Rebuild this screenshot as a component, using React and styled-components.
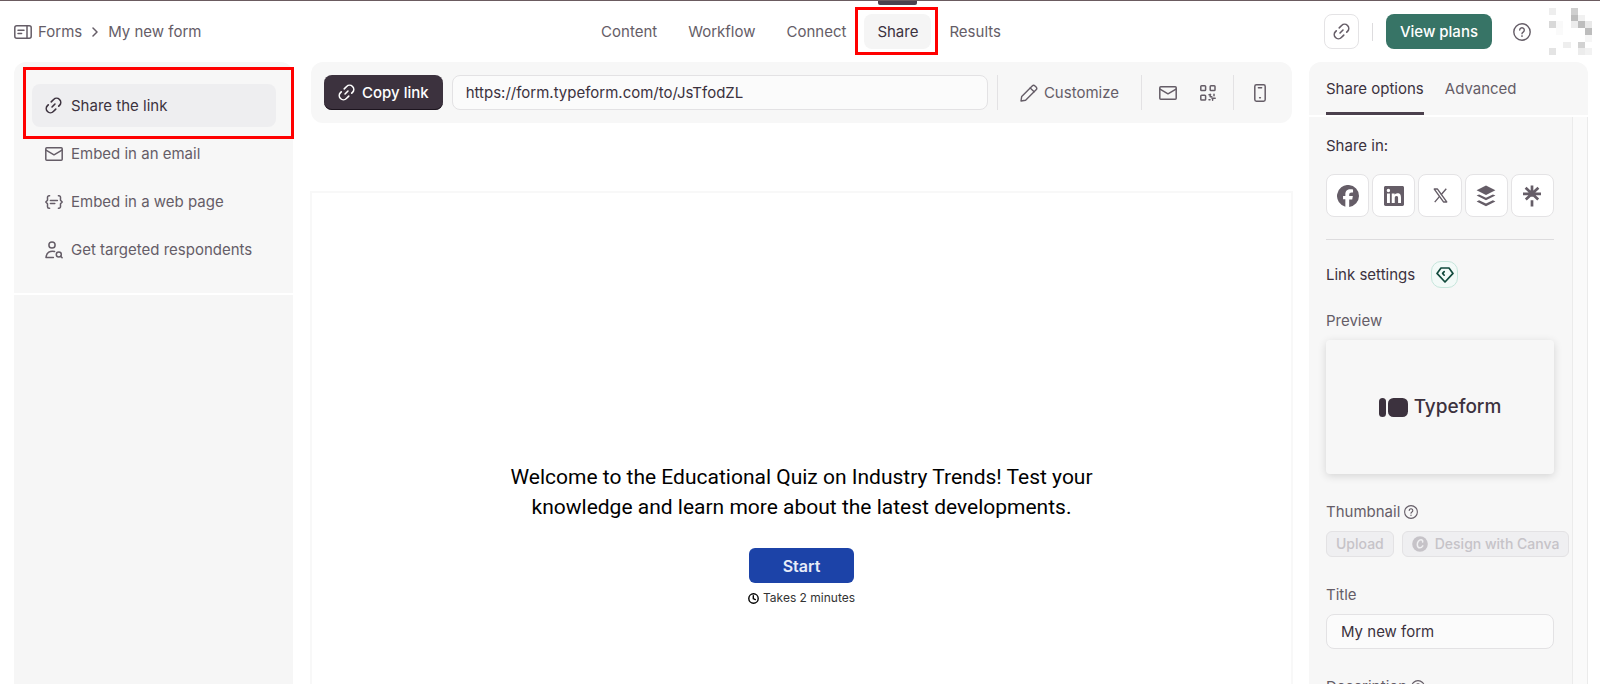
import React, { useState } from "react";
import styled, { createGlobalStyle } from "styled-components";

const LinkIcon = ({ size = 17 }) => (
  <Svg width={size} height={size} viewBox="3 3 18 18" strokeWidth="1.7">
    <g transform="rotate(-45 12 12)">
      <path d="M11 16.4H7.4a4.4 4.4 0 0 1 0-8.8h1.2" />
      <path d="M13 7.6h3.6a4.4 4.4 0 0 1 0 8.8h-1.2" />
      <path d="M9.8 12h4.4" />
    </g>
  </Svg>
);

const FormsIcon = () => (
  <Svg width="18" height="14" viewBox="0 0 18 14">
    <rect x="0.8" y="0.8" width="16.4" height="12.4" rx="2" />
    <path d="M13 1v12M4 5.2h6M4 8.6h3.6" />
  </Svg>
);

const MailIcon = () => (
  <Svg width="18" height="14" viewBox="0 0 18 14">
    <rect x="0.8" y="0.8" width="16.4" height="12.4" rx="1" />
    <path d="M1 3.2l8 4.6 8-4.6" />
  </Svg>
);

const BracesIcon = () => (
  <Svg width="18" height="14" viewBox="0 0 18 14">
    <path d="M4.6 0.8H4A1.5 1.5 0 0 0 2.5 2.3v2.9L0.8 7l1.7 1.8v2.9A1.5 1.5 0 0 0 4 13.2h.6" />
    <path d="M13.4 0.8h.6a1.5 1.5 0 0 1 1.5 1.5v2.9L17.2 7l-1.7 1.8v2.9a1.5 1.5 0 0 1-1.5 1.5h-.6" />
    <path d="M5.4 5.4h7M5.4 8.6h4.4" />
  </Svg>
);

const PersonIcon = () => (
  <Svg width="18" height="18" viewBox="0 0 18 18">
    <circle cx="7" cy="4" r="3.1" />
    <path d="M9.6 10.4C5 9.4 1.6 11.6 1 16.4h7.4" />
    <circle cx="13.8" cy="13.4" r="2.5" />
    <path d="M15.7 15.2l1.4 1.5" />
  </Svg>
);

const PencilIcon = () => (
  <Svg width="18" height="18" viewBox="0 0 18 18" strokeWidth="1.4">
    <path d="M1 17l.7-4.6L12.2 1.9a2 2 0 0 1 2.8 0l1.1 1.1a2 2 0 0 1 0 2.8L5.6 16.3z" />
    <path d="M10.2 3.9l3.9 3.9" />
  </Svg>
);

const QrIcon = () => (
  <Svg width="16" height="16" viewBox="0 0 16 16">
    <rect x="0.8" y="0.8" width="4.8" height="4.8" rx="0.8" />
    <rect x="10.2" y="0.8" width="4.8" height="4.8" rx="0.8" />
    <rect x="0.8" y="10.2" width="4.8" height="4.8" rx="0.8" />
    <path d="M9 9.8h1.6M10.2 9.2v2.6h1.6M14 9.2v1.6M9 14.8h1M12 13.2h3.2M12.6 13.2v2" />
  </Svg>
);

const PhoneIcon = () => (
  <Svg width="12" height="18" viewBox="0 0 12 18">
    <rect x="0.8" y="0.8" width="10.4" height="16.4" rx="1.6" />
    <path d="M4.4 3.8h3.2M5.6 13.8h.8" />
  </Svg>
);

const HelpIcon = ({ size }) => (
  <Svg width={size} height={size} viewBox="0 0 18 18" strokeWidth="1.4">
    <circle cx="9" cy="9" r="8.2" />
    <path d="M6.7 7.1a2.3 2.3 0 1 1 3.5 2c-.8.5-1.2.8-1.2 1.6M9 12.8v.6" />
  </Svg>
);

const GemIcon = () => (
  <Svg width="18" height="16" viewBox="0 0 18 16" strokeWidth="1.7">
    <path d="M5 1h8l4 5.4L9 15 1 6.4z" />
    <path d="M8.2 4.6L6.6 6.4l1.6 1.8" />
  </Svg>
);

const ClockIcon = () => (
  <Svg width="11" height="11" viewBox="0 0 11 11" strokeWidth="1.4">
    <circle cx="5.5" cy="5.5" r="4.7" />
    <path d="M5.3 2.8v2.9l2 .9" />
  </Svg>
);

const FacebookIcon = () => (
  <Svg width="22" height="22" viewBox="0 0 24 24" $solid>
    <path d="M24 12A12 12 0 1 0 9.1 23.6v-8H6.6V12h2.5v-1.6c0-4 1.9-5.9 5.8-5.9.8 0 2 .1 2.6.3v3.3h-1.4c-2 0-2.8.8-2.8 2.8V12h4l-.7 3.7h-3.3v8.2A12 12 0 0 0 24 12z" />
  </Svg>
);

const LinkedinIcon = () => (
  <Svg width="20" height="20" viewBox="0 0 24 24" $solid>
    <path d="M22.2 0H1.8C.8 0 0 .8 0 1.7v20.6c0 .9.8 1.7 1.8 1.7h20.4c1 0 1.8-.8 1.8-1.7V1.7c0-.9-.8-1.7-1.8-1.7zM7.1 20.5H3.6V9h3.5zM5.3 7.4a2 2 0 1 1 0-4.1 2 2 0 0 1 0 4.1zm15.1 13.1h-3.5v-5.6c0-1.3 0-3-1.9-3s-2.1 1.4-2.1 2.9v5.7H9.3V9h3.4v1.6c.5-.9 1.6-1.9 3.4-1.9 3.6 0 4.3 2.4 4.3 5.5z" />
  </Svg>
);

const XIcon = () => (
  <Svg width="15" height="15" viewBox="-1 -1 26 26" strokeWidth="2.4" strokeLinecap="butt">
    <path d="M1.2 0.8h5.6L22.8 23.2h-5.6z" />
    <path d="M22 0.4l-9 10.2M10.4 13.6L2 23.4" />
  </Svg>
);

const BufferIcon = () => (
  <Svg width="20" height="22" viewBox="0 0 20 22" $solid>
    <path d="M10 0.6l9.4 4.7L10 10 .6 5.3z" />
    <path d="M.6 10.6l2.5-1.2L10 12.8l6.9-3.4 2.5 1.2L10 15.3z" />
    <path d="M.6 16.4l2.5-1.2 6.9 3.4 6.9-3.4 2.5 1.2L10 21.2z" />
  </Svg>
);

const LinktreeIcon = () => (
  <Svg width="18" height="22" viewBox="0 0 18 22" strokeWidth="2.7" strokeLinecap="butt">
    <path d="M9 0.4v11.4M9 15.2v6.4M0 8.8h18M2.6 2.8l12.6 11.6M15.4 2.8L2.8 14.4" />
  </Svg>
);

const CanvaIcon = () => (
  <Svg width="16" height="16" viewBox="0 0 16 16" strokeWidth="1.5">
    <circle cx="8" cy="8" r="7.8" fill="currentColor" stroke="none" />
    <path
      d="M10.6 6.1c.4-1.2-.3-2.3-1.6-2.3-2 0-3.7 2.3-3.7 4.6 0 2 1 3.4 2.6 3.4 1.3 0 2.2-.8 2.9-1.9"
      stroke="#efeff1"
    />
  </Svg>
);

const LogoMark = () => (
  <Svg width="29" height="19" viewBox="0 0 29 19" $solid>
    <rect width="7" height="19" rx="3.5" />
    <rect x="9" width="20" height="19" rx="5.5" />
  </Svg>
);

const avatarCells = [
  [0, 0, "#eeeeee"], [3, 0, "#cfcfcf"],
  [3, 1, "#bdbdbd"], [4, 1, "#f1f1f1"],
  [0, 2, "#d8d8d8"], [1, 2, "#f9f9f9"], [3, 2, "#ececec"], [4, 2, "#bdbdbd"], [5, 2, "#e9e9e9"],
  [1, 3, "#fafafa"], [5, 3, "#bdbdbd"],
  [5, 4, "#f6f6f6"],
  [2, 5, "#eeeeee"], [4, 5, "#d2d2d2"],
  [0, 6, "#e4e4e4"], [4, 6, "#ececec"], [5, 6, "#f2f2f2"],
];

const Avatar = () => (
  <svg width="43" height="47" viewBox="0 0 6 7" preserveAspectRatio="none" shapeRendering="crispEdges">
    {avatarCells.map(([x, y, fill]) => (
      <rect key={`${x}-${y}`} x={x} y={y} width="1" height="1" fill={fill} />
    ))}
  </svg>
);

const navItems = ["Content", "Workflow", "Connect", "Share", "Results"];

const menuItems = [
  { label: "Share the link", icon: <LinkIcon /> },
  { label: "Embed in an email", icon: <MailIcon /> },
  { label: "Embed in a web page", icon: <BracesIcon /> },
  { label: "Get targeted respondents", icon: <PersonIcon /> },
];

const socials = [
  { name: "Facebook", icon: <FacebookIcon /> },
  { name: "LinkedIn", icon: <LinkedinIcon /> },
  { name: "X", icon: <XIcon /> },
  { name: "Buffer", icon: <BufferIcon /> },
  { name: "Linktree", icon: <LinktreeIcon /> },
];

const App = () => {
  const [title, setTitle] = useState("My new form");

  return (
    <Page>
      <GlobalStyle />
      <Header>
        <Breadcrumb aria-label="Breadcrumb">
          <a href="#forms">
            <FormsIcon />
            Forms
          </a>
          <Svg width="6" height="10" viewBox="0 0 6 10">
            <path d="M1 1l4 4-4 4" />
          </Svg>
          <a href="#form">My new form</a>
        </Breadcrumb>
        <Nav>
          {navItems.map((item) => (
            <NavLink key={item} href={`#${item.toLowerCase()}`} $active={item === "Share"}>
              {item}
            </NavLink>
          ))}
        </Nav>
        <HeaderActions>
          <IconButton aria-label="Copy form link">
            <LinkIcon />
          </IconButton>
          <HeaderDivider />
          <PlansButton>View plans</PlansButton>
          <PlainButton aria-label="Help">
            <HelpIcon size={18} />
          </PlainButton>
          <Avatar />
        </HeaderActions>
      </Header>

      <Body>
        <SideBar>
          <Menu>
            {menuItems.map((item, i) => (
              <MenuItem key={item.label} $active={i === 0}>
                <MenuIcon>{item.icon}</MenuIcon>
                {item.label}
              </MenuItem>
            ))}
          </Menu>
          <SideBarRest />
        </SideBar>

        <Main>
          <Toolbar>
            <CopyButton>
              <LinkIcon />
              Copy link
            </CopyButton>
            <UrlInput aria-label="Form link" readOnly value="https://form.typeform.com/to/JsTfodZL" />
            <ToolGroup $pad={22}>
              <ToolButton>
                <PencilIcon />
                Customize
              </ToolButton>
            </ToolGroup>
            <ToolGroup $pad={17}>
              <ToolButton aria-label="Share by email">
                <MailIcon />
              </ToolButton>
              <ToolButton aria-label="QR code">
                <QrIcon />
              </ToolButton>
            </ToolGroup>
            <ToolGroup $pad={20}>
              <ToolButton aria-label="Mobile preview">
                <PhoneIcon />
              </ToolButton>
            </ToolGroup>
          </Toolbar>
          <FormFrame>
            <Welcome>
              Welcome to the Educational Quiz on Industry Trends! Test your knowledge and learn more about the latest
              developments.
            </Welcome>
            <StartButton>Start</StartButton>
            <Duration>
              <ClockIcon />
              Takes 2 minutes
            </Duration>
          </FormFrame>
        </Main>

        <Options>
          <Tabs>
            <Tab $active>Share options</Tab>
            <Tab>Advanced</Tab>
          </Tabs>
          <OptionsBody>
            <OptionsContent>
              <SectionTitle>Share in:</SectionTitle>
              <SocialRow>
                {socials.map((s) => (
                  <SocialButton key={s.name} aria-label={s.name}>
                    {s.icon}
                  </SocialButton>
                ))}
              </SocialRow>
              <SettingsRow>
                <SectionTitle>Link settings</SectionTitle>
                <Badge>
                  <GemIcon />
                </Badge>
              </SettingsRow>
              <Label as="span">Preview</Label>
              <PreviewCard>
                <LogoMark />
                Typeform
              </PreviewCard>
              <Label as="span">
                Thumbnail <HelpIcon size={14} />
              </Label>
              <UploadRow>
                <SmallButton disabled>Upload</SmallButton>
                <SmallButton disabled>
                  <CanvaIcon />
                  Design with Canva
                </SmallButton>
              </UploadRow>
              <Label htmlFor="title">Title</Label>
              <TitleInput id="title" value={title} onChange={(e) => setTitle(e.target.value)} />
              <Label htmlFor="description">
                Description <HelpIcon size={14} />
              </Label>
              <Description id="description" />
            </OptionsContent>
            <ScrollTrack />
          </OptionsBody>
        </Options>
      </Body>
    </Page>
  );
};

const GlobalStyle = createGlobalStyle`
  * {
    box-sizing: border-box;
  }

  body {
    margin: 0;
    background: #fff;
  }

  body, button, input, textarea {
    font-family: Inter, "Liberation Sans", sans-serif;
    font-size: 15px;
    line-height: 20px;
    color: #655d67;
  }

  button {
    padding: 0;
    border: none;
    background: transparent;
    cursor: pointer;
  }

  a {
    color: inherit;
    text-decoration: none;
  }
`;

const Svg = styled.svg.attrs((p) => ({
  fill: p.$solid ? "currentColor" : "none",
  stroke: p.$solid ? "none" : "currentColor",
  strokeWidth: p.strokeWidth || 1.5,
  strokeLinecap: p.strokeLinecap || "round",
  strokeLinejoin: "round",
}))`
  display: block;
  flex-shrink: 0;
`;

const Page = styled.div`
  display: flex;
  flex-direction: column;
  height: 100vh;
  overflow: hidden;
  border-top: 1px solid #6b5b60;
`;

const Header = styled.header`
  display: grid;
  grid-template-columns: 1fr auto 1fr;
  align-items: center;
  height: 61px;
  flex-shrink: 0;
  padding: 0 8px 0 10px;
`;

const Breadcrumb = styled.nav`
  display: flex;
  align-items: center;
  gap: 10px;
  padding-left: 4px;

  a {
    display: flex;
    align-items: center;
    gap: 6px;
  }
`;

const Nav = styled.nav`
  display: flex;
  gap: 5px;
`;

const NavLink = styled.a`
  position: relative;
  padding: 8px 13px 7px;
  border-radius: 8px;
  color: ${(p) => (p.$active ? "#3c323e" : "#655d67")};
  background: ${(p) => (p.$active ? "#f5f5f5" : "transparent")};

  ${(p) =>
    p.$active &&
    `
    &::before {
      content: "";
      position: absolute;
      top: -14px;
      left: 14px;
      right: 14px;
      height: 5px;
      border-radius: 0 0 2px 2px;
      background: #4c414e;
    }

    &::after {
      content: "";
      position: absolute;
      inset: -7px -7px -6px -9px;
      border: 3px solid #f00;
    }
  `}
`;

const HeaderActions = styled.div`
  display: flex;
  align-items: center;
  justify-content: flex-end;
`;

const IconButton = styled.button`
  display: grid;
  place-items: center;
  width: 35px;
  height: 35px;
  border: 1px solid #e4e3e5;
  border-radius: 8px;
`;

const HeaderDivider = styled.span`
  width: 1px;
  height: 18px;
  margin: 0 13px;
  background: #dddcde;
`;

const PlansButton = styled.button`
  height: 35px;
  padding: 0 14px;
  border-radius: 8px;
  background: #377466;
  color: #fff;
  font-weight: 500;
`;

const PlainButton = styled.button`
  margin: 0 18px 0 21px;
`;

const Body = styled.div`
  display: flex;
  flex: 1;
  min-height: 0;
  padding: 0 12px 0 14px;
`;

const SideBar = styled.aside`
  display: flex;
  flex-direction: column;
  gap: 2px;
  width: 279px;
  flex-shrink: 0;
`;

const Menu = styled.div`
  display: flex;
  flex-direction: column;
  gap: 5px;
  padding: 22px 17px 22px 18px;
  border-radius: 12px 12px 0 0;
  background: #f7f7f7;
`;

const MenuItem = styled.button`
  position: relative;
  display: flex;
  align-items: center;
  gap: 8px;
  height: 43px;
  padding: 0 12px;
  border-radius: 8px;
  text-align: left;
  color: ${(p) => (p.$active ? "#3c323e" : "#655d67")};
  background: ${(p) => (p.$active ? "#eeeef0" : "transparent")};

  ${(p) =>
    p.$active &&
    `
    &::after {
      content: "";
      position: absolute;
      inset: -17px -18px -12px -9px;
      border: 3px solid #f00;
    }
  `}
`;

const MenuIcon = styled.span`
  display: grid;
  place-items: center;
  width: 19px;
`;

const SideBarRest = styled.div`
  flex: 1;
  background: #f6f6f6;
`;

const Main = styled.main`
  display: flex;
  flex-direction: column;
  flex: 1;
  gap: 68px;
  min-width: 0;
  margin: 0 16px 0 17px;
`;

const Toolbar = styled.div`
  display: flex;
  align-items: center;
  height: 61px;
  flex-shrink: 0;
  margin: 0 1px;
  padding: 0 6px 0 13px;
  border-radius: 12px;
  background: #f7f7f7;
`;

const CopyButton = styled.button`
  display: flex;
  align-items: center;
  gap: 7px;
  height: 35px;
  padding: 0 14px;
  border-radius: 8px;
  background: #3c323e;
  box-shadow: inset 0 -1px 0 #1c141e;
  color: #fff;
  font-weight: 500;
`;

const UrlInput = styled.input`
  flex: 1;
  min-width: 0;
  height: 35px;
  margin: 0 9px;
  padding: 0 13px;
  border: 1px solid #e3e2e4;
  border-radius: 8px;
  background: #fbfbfb;
  color: #3c323e;
`;

const ToolGroup = styled.div`
  display: flex;
  align-items: center;
  gap: 23px;
  height: 35px;
  padding: 0 ${(p) => p.$pad}px;
  border-left: 1px solid #e3e2e4;
`;

const ToolButton = styled.button`
  display: flex;
  align-items: center;
  gap: 6px;
`;

const FormFrame = styled.section`
  display: flex;
  flex-direction: column;
  align-items: center;
  flex: 1;
  padding-top: 269px;
  border: 2px solid #f8f8f8;
  border-bottom: none;
`;

const Welcome = styled.h1`
  max-width: 600px;
  margin: 0;
  font-family: Roboto, "Liberation Sans", sans-serif;
  font-size: 21px;
  line-height: 30px;
  font-weight: 400;
  text-align: center;
  color: #000;
`;

const StartButton = styled.button`
  height: 35px;
  margin-top: 26px;
  padding: 0 34px;
  border-radius: 6px;
  background: #1c43a8;
  color: #e8ecf8;
  font-size: 16px;
  font-weight: 600;
`;

const Duration = styled.p`
  display: flex;
  align-items: center;
  gap: 4px;
  margin: 5px 0 0;
  font-size: 12px;
  color: #333;

  svg {
    color: #000;
  }
`;

const Options = styled.aside`
  display: flex;
  flex-direction: column;
  gap: 2px;
  width: 279px;
  flex-shrink: 0;
`;

const Tabs = styled.div`
  display: flex;
  gap: 21px;
  height: 53px;
  flex-shrink: 0;
  padding: 0 17px;
  border-radius: 12px 12px 0 0;
  background: #f7f7f7;
`;

const Tab = styled.button`
  padding-top: 4px;
  border-bottom: 3px solid ${(p) => (p.$active ? "#4c414e" : "transparent")};
  color: ${(p) => (p.$active ? "#3c323e" : "#655d67")};
`;

const OptionsBody = styled.div`
  display: flex;
  flex: 1;
  min-height: 0;
  background: #f7f7f7;
`;

const OptionsContent = styled.div`
  display: flex;
  flex-direction: column;
  flex: 1;
  min-width: 0;
  padding: 19px 18px 0 17px;
`;

const ScrollTrack = styled.div`
  width: 16px;
  border: 1px solid #ebebeb;
  border-width: 0 1px;
  background: #fafafa;
`;

const SectionTitle = styled.h2`
  margin: 0;
  font-size: 15px;
  line-height: 20px;
  font-weight: 400;
  color: #3c323e;
`;

const SocialRow = styled.div`
  display: flex;
  gap: 3px;
  padding: 18px 0 22px;
  border-bottom: 1px solid #dddcde;
`;

const SocialButton = styled.button`
  display: grid;
  place-items: center;
  flex: 1;
  height: 43px;
  border: 1px solid #e4e3e5;
  border-radius: 8px;
  background: #fff;
`;

const SettingsRow = styled.div`
  display: flex;
  align-items: center;
  gap: 16px;
  margin: 21px 0 23px;
`;

const Badge = styled.span`
  display: grid;
  place-items: center;
  width: 27px;
  height: 27px;
  border: 1px solid #c6e6dc;
  border-radius: 10px;
  background: #f3faf8;
  color: #124a3c;
`;

const Label = styled.label`
  display: flex;
  align-items: center;
  gap: 4px;
`;

const PreviewCard = styled.div`
  display: flex;
  align-items: center;
  justify-content: center;
  gap: 6px;
  height: 134px;
  flex-shrink: 0;
  margin: 9px 0 28px;
  border-radius: 4px;
  box-shadow: 0 2px 8px rgba(0, 0, 0, 0.14);
  color: #3c323e;
  font-size: 19px;
  font-weight: 500;
`;

const UploadRow = styled.div`
  display: flex;
  gap: 8px;
  margin: 9px 0 28px;
`;

const SmallButton = styled.button`
  display: flex;
  align-items: center;
  flex-shrink: 0;
  gap: 7px;
  height: 26px;
  padding: 0 9px;
  border: 1px solid #e3e2e4;
  border-radius: 6px;
  background: #efeff1;
  color: #c6c3c8;
  font-size: 14px;
  font-weight: 500;
  white-space: nowrap;
`;

const TitleInput = styled.input`
  width: 100%;
  height: 35px;
  flex-shrink: 0;
  margin: 9px 0 28px;
  padding: 0 14px;
  border: 1px solid #e3e2e4;
  border-radius: 8px;
  background: #fbfbfb;
  color: #3c323e;
`;

const Description = styled.textarea`
  height: 80px;
  flex-shrink: 0;
  margin-top: 9px;
  border: 1px solid #e3e2e4;
  border-radius: 8px;
  background: #fbfbfb;
`;

export default App;
